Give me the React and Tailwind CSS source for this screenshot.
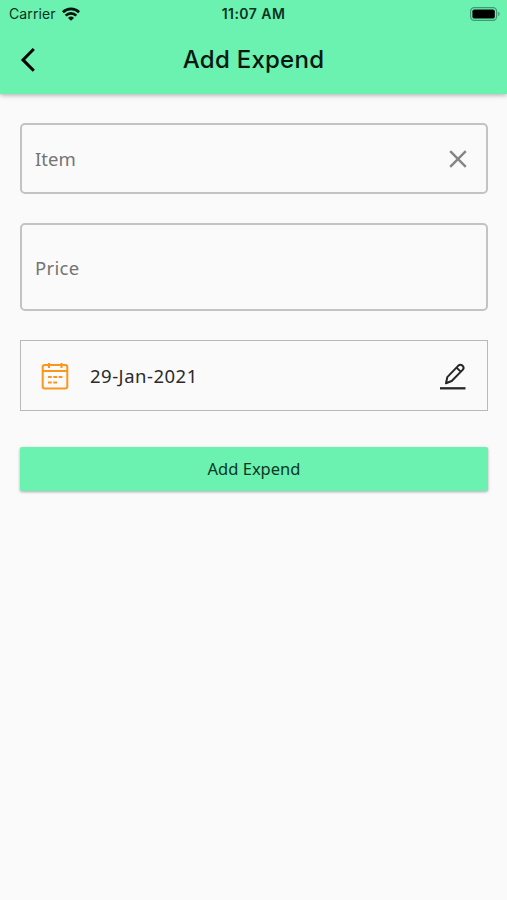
import { useState } from "react";

function StatusBar() {
  return (
    <div className="relative flex h-[27px] items-center justify-between pl-[9px] pr-[6px] text-[#0b3322]">
      <div className="flex items-center gap-[6px]">
        <span className="font-['Inter',sans-serif] text-[14px] leading-[27px] tracking-[0.1px]">Carrier</span>
        <svg width="18" height="14" viewBox="0 0 18 14" fill="none" stroke="#04150d" strokeWidth="2.7">
          <path d="M0.9 5.2a11.5 11.5 0 0 1 16.2 0" />
          <path d="M3.7 8.6a7.5 7.5 0 0 1 10.6 0" />
          <path d="M9 13.8L6 10.9a4.3 4.3 0 0 1 6 0z" fill="#04150d" stroke="none" />
        </svg>
      </div>
      <span className="absolute left-0 w-full text-center font-['Inter',sans-serif] text-[14px] font-semibold leading-[27px] tracking-[0.45px]">
        11:07 AM
      </span>
      <svg width="31" height="14" viewBox="0 0 31 14">
        <rect x="0.6" y="0.6" width="26" height="12.8" rx="3.6" fill="none" stroke="#3d9a70" strokeWidth="1.2" />
        <rect x="2.4" y="2.4" width="22.4" height="9.2" rx="1.9" fill="#000" />
        <path d="M28.2 4.8v4.4a2.4 2.4 0 0 0 0-4.4z" fill="#3d9a70" />
      </svg>
    </div>
  );
}

function CalendarIcon() {
  return (
    <svg className="mt-px" width="28" height="28" viewBox="0 0 28 28" fill="none" stroke="#fb961a" strokeWidth="2">
      <rect x="1.7" y="3" width="24.6" height="23.5" rx="2" />
      <path d="M1.7 9h24.6M8 1v5M20.5 1v5" />
      <path d="M7 15h3.8M12.3 15h3.8M17.6 15h3.8M7 20.6h3.8M12.3 20.6h3.8" />
    </svg>
  );
}

function EditIcon() {
  return (
    <svg width="26" height="28" viewBox="0 0 26 28" fill="none" stroke="#262626" strokeWidth="2" strokeLinejoin="round">
      <path d="M6 21.3l1.3-6.2L18.6 3.4q1.6-1.5 3.9.2 2 2 .4 4L11.7 19z" />
      <path d="M16.5 5.6l4.2 4" />
      <path d="M0 26.3h25.5" strokeWidth="2.3" />
    </svg>
  );
}

export default function App() {
  const [item, setItem] = useState("");
  const [price, setPrice] = useState("");

  return (
    <div className="h-[900px] w-full bg-[#fafafa] font-['Noto_Sans',sans-serif]">
      <header className="h-[94px] bg-[#6bf1b0] shadow-[0_1px_5px_rgba(0,0,0,0.33)]">
        <StatusBar />
        <div className="relative flex h-[66px] items-center pl-[20px]">
          <button>
            <svg width="16" height="26" viewBox="0 0 16 26" fill="none" stroke="#000" strokeWidth="3">
              <path d="M13.8 2L3 12.9l10.8 10.9" />
            </svg>
          </button>
          <h1 className="absolute left-0 w-full text-center font-['Inter',sans-serif] text-[24px] font-medium tracking-[0.25px] text-[#06180f]">
            Add Expend
          </h1>
        </div>
      </header>

      <main className="flex flex-col pl-5 pr-[19px] pt-[29px]">
        <div className="flex h-[71px] items-center justify-between rounded-[5px] border-2 border-[#c3c3c3] pl-[13px] pr-[19px]">
          <input
            value={item}
            onChange={(e) => setItem(e.target.value)}
            placeholder="Item"
            className="w-[300px] text-[18.5px] outline-none placeholder:text-[#747474]"
          />
          <button onClick={() => setItem("")}>
            <svg width="18" height="18" viewBox="0 0 18 18" stroke="#858585" strokeWidth="2.4">
              <path d="M1.2 1.2l15.6 15.6M16.8 1.2L1.2 16.8" />
            </svg>
          </button>
        </div>

        <div className="mt-[29px] flex h-[88px] items-center rounded-[5px] border-2 border-[#c3c3c3] pl-[13px]">
          <input
            value={price}
            onChange={(e) => setPrice(e.target.value)}
            placeholder="Price"
            className="w-[300px] pt-px text-[18.5px] tracking-[0.3px] outline-none placeholder:text-[#747474]"
          />
        </div>

        <div className="mt-[29px] flex h-[71px] items-center border border-[#b9b9b9] pl-[20px] pr-[21px]">
          <CalendarIcon />
          <span className="ml-[21px] flex-1 text-[18.5px] tracking-[0.5px] text-[#2b2b2b]">29-Jan-2021</span>
          <EditIcon />
        </div>

        <button className="mt-[36px] h-[44px] rounded-[2px] bg-[#6bf1b0] pt-px text-[16.5px] text-[#0e3825] shadow-[0_1px_3px_rgba(0,0,0,0.33)]">
          Add Expend
        </button>
      </main>
    </div>
  );
}
